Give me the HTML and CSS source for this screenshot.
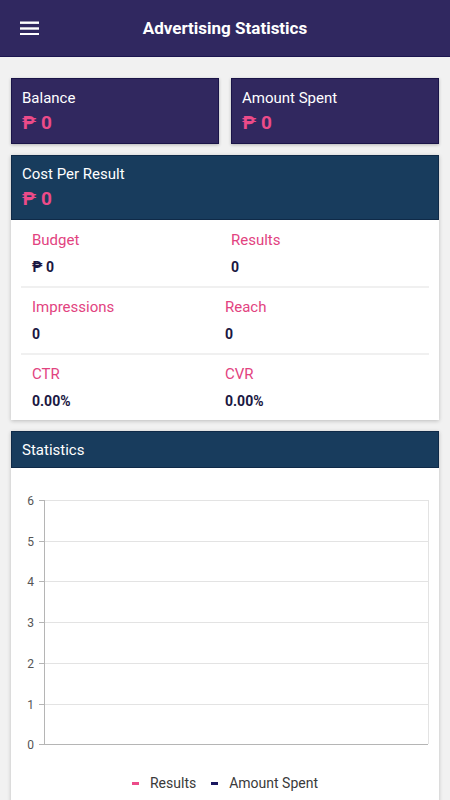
FILE: index.html
```html
<!DOCTYPE html>
<html>
<head>
<meta charset="utf-8">
<link rel="stylesheet" href="styles.css">
</head>
<body>
<header class="topbar">
  <svg class="menu" width="19" height="14" viewBox="0 0 19 14"><rect x="0" y="0.5" width="19" height="2.4" fill="#fff"/><rect x="0" y="6.3" width="19" height="2.4" fill="#fff"/><rect x="0" y="12" width="19" height="2.4" fill="#fff"/></svg>
  <h1 class="title">Advertising Statistics</h1>
</header>
<main class="content">
  <div class="summary">
    <div class="sum-card">
      <div class="sum-label">Balance</div>
      <div class="sum-value">₱ 0</div>
    </div>
    <div class="sum-card">
      <div class="sum-label">Amount Spent</div>
      <div class="sum-value">₱ 0</div>
    </div>
  </div>

  <section class="card">
    <div class="card-head tall">
      <div class="sum-label">Cost Per Result</div>
      <div class="sum-value">₱ 0</div>
    </div>
    <div class="card-body">
      <div class="row first">
        <div class="cell"><div class="lbl">Budget</div><div class="val">₱ 0</div></div>
        <div class="cell c2a"><div class="lbl">Results</div><div class="val">0</div></div>
      </div>
      <div class="row">
        <div class="cell"><div class="lbl">Impressions</div><div class="val">0</div></div>
        <div class="cell c2"><div class="lbl">Reach</div><div class="val">0</div></div>
      </div>
      <div class="row last">
        <div class="cell"><div class="lbl">CTR</div><div class="val">0.00%</div></div>
        <div class="cell c2"><div class="lbl">CVR</div><div class="val">0.00%</div></div>
      </div>
    </div>
  </section>

  <section class="card">
    <div class="card-head short">
      <div class="sum-label">Statistics</div>
    </div>
    <div class="chart-body">
      <svg class="chart" width="426" height="290" viewBox="0 0 426 290">
        <g stroke="#e3e3e3" stroke-width="1">
          <line x1="32" y1="32.5" x2="416" y2="32.5"/>
          <line x1="32" y1="73.5" x2="416" y2="73.5"/>
          <line x1="32" y1="113.5" x2="416" y2="113.5"/>
          <line x1="32" y1="154.5" x2="416" y2="154.5"/>
          <line x1="32" y1="195.5" x2="416" y2="195.5"/>
          <line x1="32" y1="236.5" x2="416" y2="236.5"/>
          <line x1="416.5" y1="32" x2="416.5" y2="276"/>
        </g>
        <g stroke="#b5b5b5" stroke-width="1">
          <line x1="32.5" y1="32" x2="32.5" y2="277"/>
          <line x1="27" y1="276.5" x2="416" y2="276.5"/>
          <line x1="27" y1="32.5" x2="32" y2="32.5"/>
          <line x1="27" y1="73.5" x2="32" y2="73.5"/>
          <line x1="27" y1="113.5" x2="32" y2="113.5"/>
          <line x1="27" y1="154.5" x2="32" y2="154.5"/>
          <line x1="27" y1="195.5" x2="32" y2="195.5"/>
          <line x1="27" y1="236.5" x2="32" y2="236.5"/>
        </g>
        <g class="ytick" fill="#555" text-anchor="end">
          <text x="22" y="36.5">6</text>
          <text x="22" y="77.5">5</text>
          <text x="22" y="117.5">4</text>
          <text x="22" y="158.5">3</text>
          <text x="22" y="199.5">2</text>
          <text x="22" y="240.5">1</text>
          <text x="22" y="280.5">0</text>
        </g>
      </svg>
      <div class="legend">
        <span class="key"><i class="dash pink"></i>Results</span>
        <span class="key"><i class="dash navy"></i>Amount Spent</span>
      </div>
    </div>
  </section>
</main>
</body>
</html>
```
FILE: styles.css
```css
* { box-sizing: border-box; }
html, body { margin: 0; padding: 0; }
body {
  background: #f1f1f1;
  font-family: Roboto, "Noto Sans", "DejaVu Sans", sans-serif;
  overflow: hidden;
  height: 800px;
}
.topbar {
  height: 57px;
  background: #302860;
  border-bottom: 1px solid #1c1650;
  display: flex;
  align-items: center;
  position: relative;
  padding-left: 20px;
}
.menu { display: block; margin-top: 0; }
.title {
  position: absolute;
  left: 0; right: 0;
  top: 0;
  margin: 0;
  line-height: 56px;
  text-align: center;
  color: #fff;
  font-size: 17px;
  font-weight: 700;
  pointer-events: none;
}
.content {
  padding: 21px 11px 0;
  display: flex;
  flex-direction: column;
  gap: 11px;
}
.summary {
  display: grid;
  grid-template-columns: 1fr 1fr;
  gap: 12px;
}
.sum-card {
  background: #31285f;
  border: 1px solid #1a1448;
  height: 66px;
  padding: 10px 10px 0;
  box-shadow: 0 1px 3px rgba(0,0,0,0.25);
}
.sum-label {
  color: #fff;
  font-size: 15px;
  line-height: 18px;
}
.sum-value {
  color: #ec4b89;
  font-size: 19px;
  font-weight: 700;
  line-height: 22px;
  margin-top: 5px;
}
.card {
  background: #fff;
  box-shadow: 0 1px 4px rgba(0,0,0,0.22);
}
.card-head {
  background: #183c5d;
  border: 1px solid #0f2a48;
  padding: 9px 10px 0;
}
.card-head.tall { height: 65px; }
.card-head.short { height: 37px; }
.card-body { padding: 2px 10px 0 10px; }
.row {
  display: grid;
  grid-template-columns: 1fr 1fr;
  border-bottom: 2px solid #f0f0f0;
  padding: 10px 0 10px;
}
.row.first { padding-top: 9px; height: 66px; }
.row.last { border-bottom: none; height: 65px; }
.cell { padding-left: 11px; }
.cell.c2 { padding-left: 0; }
.cell.c2a { padding-left: 6px; }
.lbl {
  color: #e2437f;
  font-size: 15px;
  line-height: 18px;
}
.val {
  color: #1a1742;
  font-size: 14px;
  font-weight: 700;
  line-height: 17px;
  margin-top: 10px;
}
.chart-body { height: 340px; }
.chart { display: block; margin-left: 1px; }
.ytick text { font-size: 12px; font-family: Roboto, "Noto Sans", sans-serif; }
.legend {
  display: flex;
  justify-content: center;
  gap: 15px;
  margin-top: 15px;
  font-size: 14px;
  color: #3a3a3a;
  line-height: 20px;
}
.key { display: flex; align-items: center; }
.dash {
  display: inline-block;
  width: 7px;
  height: 3px;
  margin-right: 11px;
}
.dash.pink { background: #ec4b89; }
.dash.navy { background: #1a1760; }
```
